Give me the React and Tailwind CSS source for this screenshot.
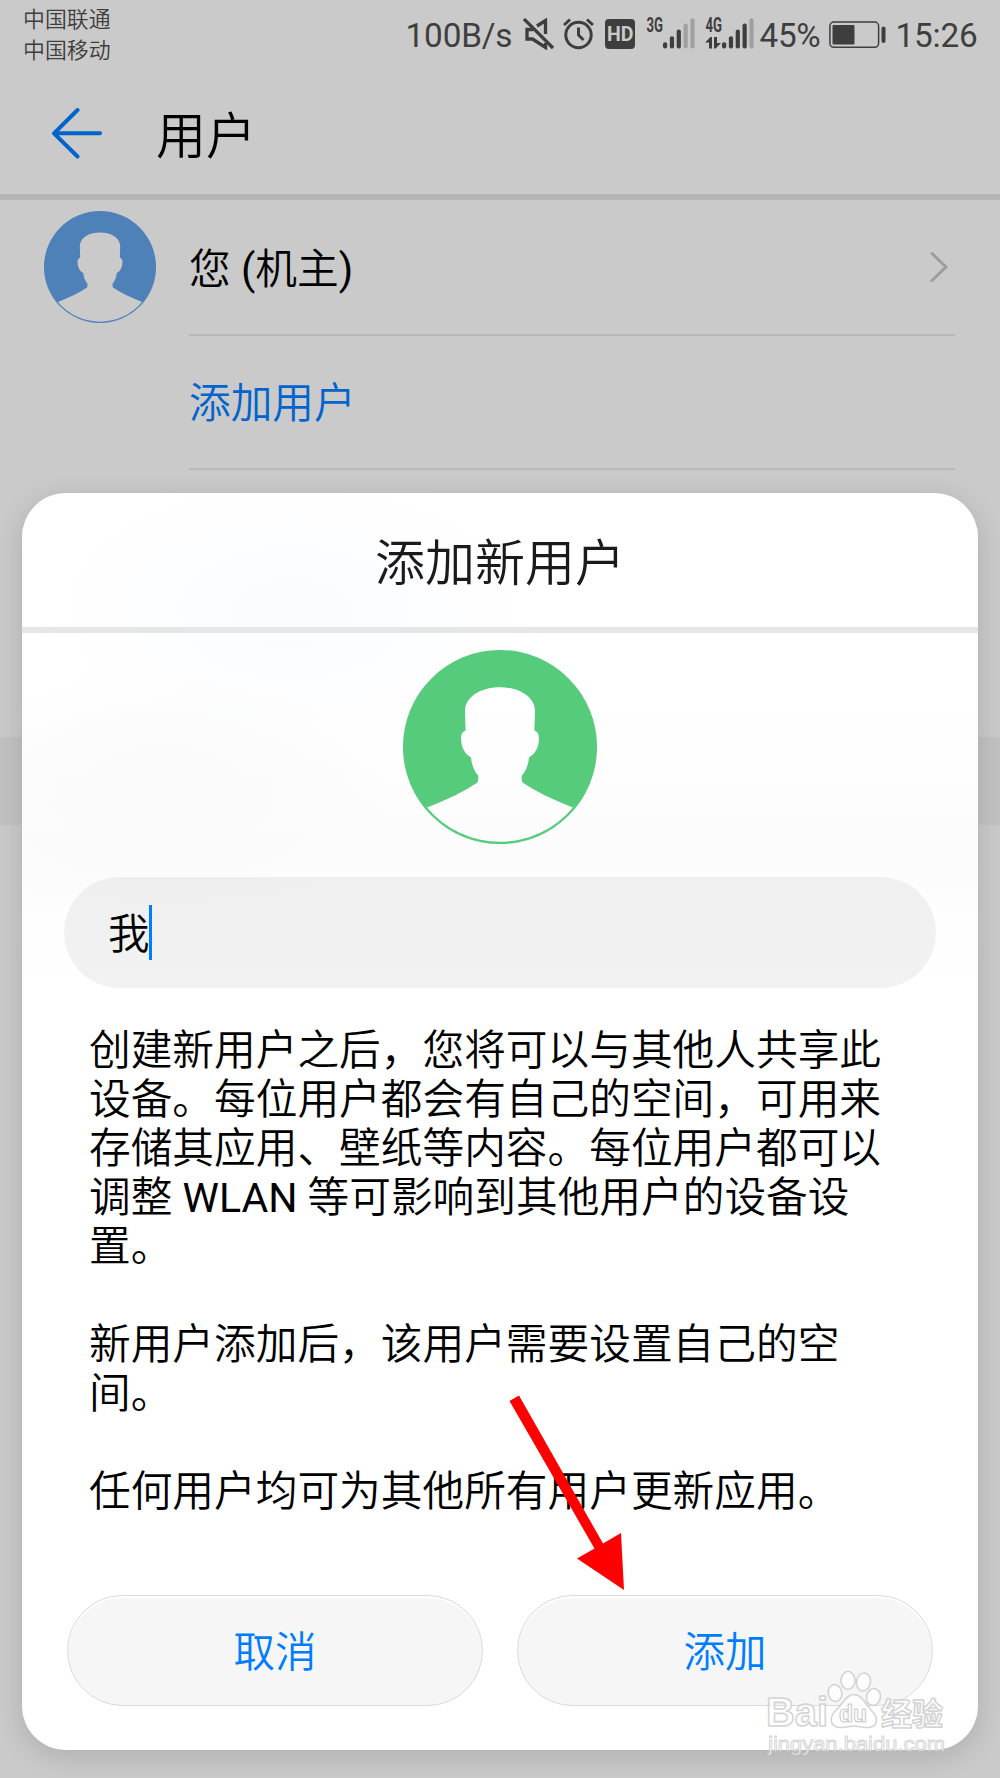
const CJK = "font-['Roboto','Noto_Sans_CJK_SC',sans-serif]";

const AVATAR_PATH =
  'M97 0A97 97 0 1 1 97 194A97 97 0 1 1 97 0Z ' +
  'M97 37.3C76 37.3 62 48 62 61L62.6 80.8C59.5 81.5 58 84 58 89C58.5 98 62 104 68 107.5C68.500 114 71 121 75 125.500Q76 129 74.500 132.500Q64 139.500 52 145.500Q38 152 24 157.500' +
  'A95 95 0 0 0 170 157.500Q156 152 142 145.500Q130 139.500 119.500 132.500Q118 129 119 125.500C123 121 125.500 114 126 107.500C132 104 135.500 98 136 89C136 84 134.500 81.500 131.400 80.800L132 61C132 48 118 37.300 97 37.300Z';

function Avatar({ className }) {
  return (
    <svg viewBox="0 0 194 194" className={className} fill="currentColor">
      <path fillRule="evenodd" d={AVATAR_PATH} />
    </svg>
  );
}

function Signal({ label, active, data }) {
  const heights = [6.3, 12.3, 19, 25, 30.3];
  return (
    <svg width="50" height="32" viewBox="0 0 50 32" fill="#3e3e3e" className="overflow-visible">
      <text x="0.5" y="14.3" fontSize="19.500" fontWeight="700" textLength="16.500" lengthAdjust="spacingAndGlyphs" className="font-['Roboto',sans-serif]">
        {label}
      </text>
      {heights.map((h, i) => (
        <rect key={i} x={17 + i * 6.850} y={30.500 - h} width="4.200" height={h} rx="2" fill={i < active ? '#3e3e3e' : '#a0a0a0'} />
      ))}
      {data && <path d="M0 24.500L5.500 19H7V30.500H4V24.500ZM9 19H12V25H16L10.500 30.500H9Z" />}
    </svg>
  );
}

function StatusBar() {
  return (
    <div className="flex h-[68px] items-start text-[#3e3e3e]">
      <div className="ml-[23px] mt-[5px] w-[382.500px] text-[21.9px] leading-[30.500px] font-[350]">
        <div>中国联通</div>
        <div>中国移动</div>
      </div>
      <div className="w-[117px] pt-[15.500px] text-[33.300px] leading-[40px] tracking-[-0.150px] whitespace-nowrap">100B/s</div>
      <svg className="mt-[18px] mr-[8.500px]" width="32" height="32" viewBox="0 0 32 32" fill="none" stroke="#3e3e3e" strokeWidth="3.300">
        <path d="M1 1L30 30" />
        <path d="M10 11.500H4V21H9.500L22.500 29.500V25M14 8L22.500 2.500V16" />
      </svg>
      <svg className="mt-[18px] mr-[11px]" width="31" height="32" viewBox="0 0 31 32" fill="none" stroke="#3e3e3e" strokeWidth="3">
        <circle cx="15.500" cy="17" r="12.700" />
        <path d="M15.500 9.500V17L20.500 22M1 7L7 1.500M30 7L24 1.500" />
      </svg>
      <svg className="mt-[19px] mr-[11px] overflow-visible" width="30" height="30" viewBox="0 0 30 30">
        <rect width="30" height="30" rx="4" fill="#3e3e3e" />
        <text x="2" y="22" fontSize="20" fontWeight="700" fill="#cacaca" textLength="26.500" lengthAdjust="spacingAndGlyphs" className="font-['Roboto',sans-serif]">HD</text>
      </svg>
      <div className="mt-[17.500px] mr-[8.500px]"><Signal label="3G" active={3} /></div>
      <div className="mt-[17.500px] mr-[5px]"><Signal label="4G" active={4} data /></div>
      <div className="w-[69px] pt-[15.500px] text-[33.300px] leading-[40px] tracking-[-0.300px]">45%</div>
      <svg className="mt-[21px]" width="57" height="28" viewBox="0 0 57 28">
        <rect x="0.900" y="1" width="48.700" height="25.300" rx="4" fill="none" stroke="#3e3e3e" strokeWidth="1.500" />
        <rect x="3.500" y="4" width="22" height="19.500" rx="1" fill="#3e3e3e" />
        <rect x="52.500" y="5.500" width="4" height="16.500" rx="2" fill="#3e3e3e" />
      </svg>
      <div className="ml-[10px] pt-[15.500px] text-[33.300px] leading-[40px] tracking-[-0.200px]">15:26</div>
    </div>
  );
}

function Watermark() {
  return (
    <svg className="absolute left-[764px] top-[1668px] overflow-visible" width="190" height="90" viewBox="0 0 190 90" fill="#fff" fillOpacity="0.75" stroke="#c6c6c6" strokeOpacity="0.75" strokeWidth="1.600" strokeLinejoin="round">
      <g>
        <text x="2" y="58" fontSize="41" fontWeight="700" textLength="62" lengthAdjust="spacingAndGlyphs" className="font-['Liberation_Sans',sans-serif]">Bai</text>
        <text x="117" y="57" fontSize="31" fontWeight="700" textLength="62" lengthAdjust="spacingAndGlyphs" className="font-['Noto_Sans_CJK_SC',sans-serif]">经验</text>
      </g>
      <ellipse cx="71" cy="25" rx="6.800" ry="8.500" transform="rotate(-12 71 25)" />
      <ellipse cx="84" cy="12.500" rx="7" ry="9" />
      <ellipse cx="99.500" cy="14" rx="7" ry="9" transform="rotate(12 99.500 14)" />
      <ellipse cx="109.500" cy="29" rx="7" ry="8.500" transform="rotate(12 109.500 29)" />
      <path d="M90 26.500C82 26.500 79 36 72 42C65 49 65 59 76 59.500C82 60 85 58 90 58C95 58 98 60 104 59.500C115 59 114 49 108 43C101 36 98 26.500 90 26.500Z" />
      <text x="75" y="54" fontSize="24" fontWeight="700" textLength="28" lengthAdjust="spacingAndGlyphs" stroke="#bbb" strokeWidth="1.200" className="font-['Liberation_Sans',sans-serif]">du</text>
      <text x="4" y="82.500" fontSize="21" textLength="177" lengthAdjust="spacingAndGlyphs" strokeWidth="1" className="font-['Liberation_Sans',sans-serif]">jingyan.baidu.com</text>
    </svg>
  );
}

function DialogButton({ children }) {
  return (
    <button className="h-[111px] flex-1 rounded-full border border-[#dadada] bg-[#f6f6f6] pt-[5px] text-[41.500px] font-[350] text-[#007dff] shadow-[inset_0_2px_1px_#ffffff]">
      {children}
    </button>
  );
}

function Dialog() {
  return (
    <div className="absolute left-[22px] top-[493px] flex h-[1257px] w-[956px] flex-col overflow-hidden rounded-[44px] bg-white bg-[radial-gradient(ellipse_260px_150px_at_270px_120px,#fbfcff,transparent),radial-gradient(ellipse_230px_130px_at_140px_300px,#fafafa,transparent),linear-gradient(to_bottom,#ffffff_200px,#fcfcfc_360px,#ffffff_500px)]">
      <h2 className="h-[134px] pt-[3.500px] text-center text-[50px] leading-[134px] font-[350] text-[#1a1a1a]">添加新用户</h2>
      <div className="h-[5.500px] shrink-0 bg-[#e5e6e6]" />
      <div className="mt-[17.500px] flex justify-center">
        <Avatar className="h-[194px] w-[194px] text-[#55cb7b]" />
      </div>
      <div className="mx-[42px] mt-[33px] flex h-[111px] shrink-0 items-center rounded-full bg-black/5 pl-[44px]">
        <span className="w-[41px] pt-[4px] text-[41.500px] leading-[60px] font-[350]">我</span>
        <span className="h-[55px] w-[3px] bg-[#007dff]" />
      </div>
      <div className="ml-[67px] mt-[38px] w-[800px] text-[41.700px] leading-[49.050px] font-[350] whitespace-nowrap">
        <p>创建新用户之后，您将可以与其他人共享此<br />设备。每位用户都会有自己的空间，可用来<br />存储其应用、壁纸等内容。每位用户都可以<br />调整 <span className="text-[41px] leading-none font-normal">WLAN</span> 等可影响到其他用户的设备设<br />置。</p>
        <p className="mt-[49px]">新用户添加后，该用户需要设置自己的空<br />间。</p>
        <p className="mt-[49px]">任何用户均可为其他所有用户更新应用。</p>
      </div>
      <div className="mt-auto mb-[44px] ml-[45px] mr-[45px] flex gap-[34px]">
        <DialogButton>取消</DialogButton>
        <DialogButton>添加</DialogButton>
      </div>
    </div>
  );
}

export default function App() {
  return (
    <div className={`relative h-[1778px] w-[1000px] overflow-hidden bg-[#cacaca] text-black ${CJK}`}>
      <StatusBar />
      <header className="flex h-[126px] items-center">
        <svg className="ml-[51px] mt-[4px]" width="52" height="52" viewBox="0 0 52 52" fill="none" stroke="#0064cc" strokeWidth="4" strokeLinecap="round" strokeLinejoin="round">
          <path d="M26.500 3L3 26.300L26.500 49.500M4 26.300H49" />
        </svg>
        <h1 className="ml-[53px] mt-[11px] text-[50px] leading-[60px] font-[350]">用户</h1>
      </header>
      <div className="h-[6px] bg-[#b4b4b4]" />
      <div className="flex h-[134px] items-center pl-[44px]">
        <Avatar className="h-[112px] w-[112px] text-[#4d81b8]" />
        <span className="ml-[33px] mt-[6px] text-[41.700px] font-[350]">您<span className="font-normal"> (</span>机主<span className="font-normal">)</span></span>
        <svg className="ml-auto mr-[51px]" width="20" height="34" viewBox="0 0 20 34" fill="none" stroke="#9d9d9d" strokeWidth="3" strokeLinecap="round" strokeLinejoin="round">
          <path d="M3 3.500L17 17L3 30.500" />
        </svg>
      </div>
      <div className="ml-[189px] h-[2px] w-[766px] bg-[#b9b9b9]" />
      <div className="flex h-[132px] items-center pt-[5px] pl-[189px] text-[41.700px] font-[350] text-[#0064cc]">添加用户</div>
      <div className="ml-[189px] h-[2px] w-[766px] bg-[#b9b9b9]" />
      <div className="mt-[267px] h-[88px] bg-[#c2c2c2]" />
      <div className="absolute left-[22px] top-[493px] h-[1257px] w-[956px] rounded-[44px] shadow-[0_6px_28px_rgba(0,0,0,0.140)]" />
      <Dialog />
      <svg className="absolute left-[505px] top-[1390px]" width="125" height="205" viewBox="0 0 125 205" fill="#ff0000">
        <path d="M4.500 11L14 5.500L98 153.500L116 143L119 200L72 168.500L89.500 158.500Z" />
      </svg>
      <Watermark />
    </div>
  );
}
